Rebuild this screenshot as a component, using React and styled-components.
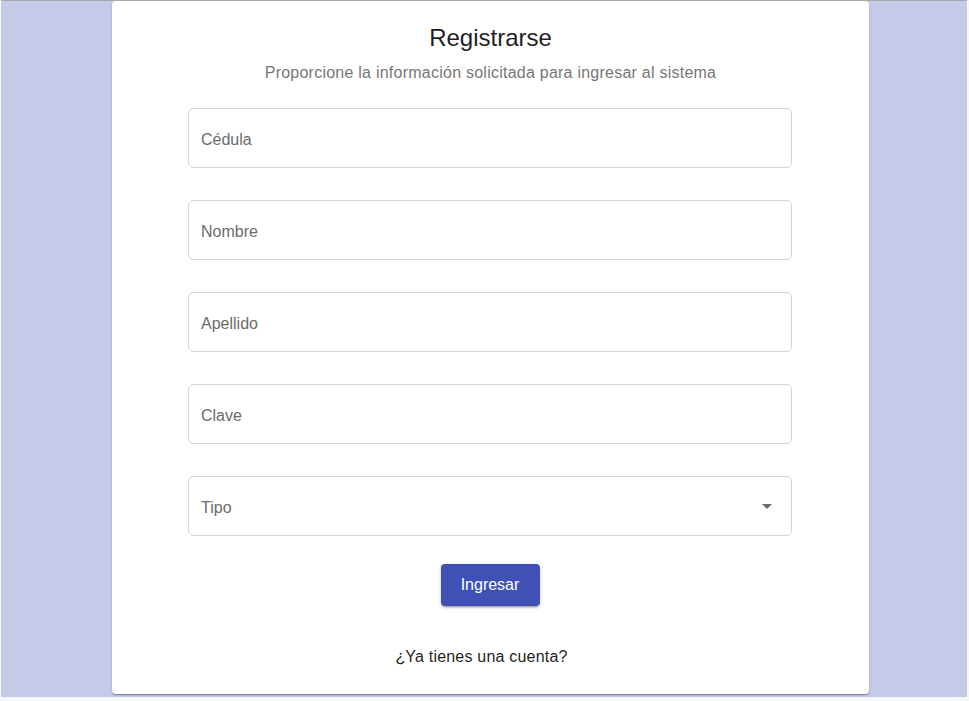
import React from 'react';
import styled, { createGlobalStyle } from 'styled-components';

const GlobalStyle = createGlobalStyle`
  body {
    margin: 0;
    background: #f7f8fc;
    font-family: 'Liberation Sans', Arial, sans-serif;
  }
`;

const Page = styled.div`
  width: 966px;
  height: 696px;
  margin-left: 1px;
  background: #c5cae9;
  border-top: 1px solid #a9a9a9;
  overflow: hidden;
`;

const Card = styled.div`
  width: 757px;
  height: 693px;
  margin-left: 111px;
  box-sizing: border-box;
  padding-top: 21px;
  background: #fff;
  border-radius: 4px;
  box-shadow: 0 2px 1px -1px rgba(0, 0, 0, 0.2), 0 1px 1px 0 rgba(0, 0, 0, 0.14),
    0 1px 3px 0 rgba(0, 0, 0, 0.12);
  display: flex;
  flex-direction: column;
  align-items: center;
`;

const Title = styled.h1`
  margin: 0;
  font-size: 24px;
  line-height: 32px;
  font-weight: 400;
  color: #1f1f1f;
`;

const Subtitle = styled.p`
  margin: 7px 0 0;
  font-size: 16px;
  line-height: 24px;
  letter-spacing: 0.24px;
  color: #777;
`;

const Form = styled.form`
  width: 604px;
  margin-top: 23px;
  margin-right: 1px;
  display: flex;
  flex-direction: column;
  align-items: center;
  gap: 32px;
`;

const Field = styled.input`
  width: 100%;
  height: 60px;
  box-sizing: border-box;
  padding: 4px 12px 0;
  border: 1px solid #d7d7d7;
  border-radius: 5px;
  font-family: inherit;
  font-size: 16px;
  color: #222;
  outline: none;
  &::placeholder {
    color: #6b6b6b;
  }
`;

const SelectBox = styled.div`
  width: 100%;
  height: 60px;
  box-sizing: border-box;
  padding: 4px 12px 0;
  border: 1px solid #d7d7d7;
  border-radius: 5px;
  display: flex;
  align-items: center;
  justify-content: space-between;
  font-size: 16px;
  color: #6b6b6b;
`;

const Button = styled.button`
  margin-top: -4px;
  width: 99px;
  height: 42px;
  border: none;
  border-radius: 4px;
  background: #3f51b5;
  color: #fff;
  font-family: inherit;
  font-size: 16px;
  cursor: pointer;
  box-shadow: 0 3px 1px -2px rgba(0, 0, 0, 0.2), 0 2px 2px 0 rgba(0, 0, 0, 0.14),
    0 1px 5px 0 rgba(0, 0, 0, 0.12);
`;

const Footer = styled.p`
  margin: 39px 18px 0 0;
  font-size: 16px;
  line-height: 24px;
  letter-spacing: 0.2px;
  color: #1f1f1f;
`;

const Arrow = () => (
  <svg width="24" height="24" viewBox="0 0 24 24" style={{ marginTop: -4 }}>
    <path d="M7 10l5 5 5-5z" fill="#6b6b6b" />
  </svg>
);

const App = () => {
  const fields = ['Cédula', 'Nombre', 'Apellido', 'Clave'];

  return (
    <>
      <GlobalStyle />
      <Page>
        <Card>
          <Title>Registrarse</Title>
          <Subtitle>Proporcione la información solicitada para ingresar al sistema</Subtitle>
          <Form onSubmit={(e) => e.preventDefault()}>
            {fields.map((f) => (
              <Field key={f} placeholder={f} type={f === 'Clave' ? 'password' : 'text'} />
            ))}
            <SelectBox>
              <span>Tipo</span>
              <Arrow />
            </SelectBox>
            <Button type="submit">Ingresar</Button>
          </Form>
          <Footer>¿Ya tienes una cuenta?</Footer>
        </Card>
      </Page>
    </>
  );
};

export default App;
